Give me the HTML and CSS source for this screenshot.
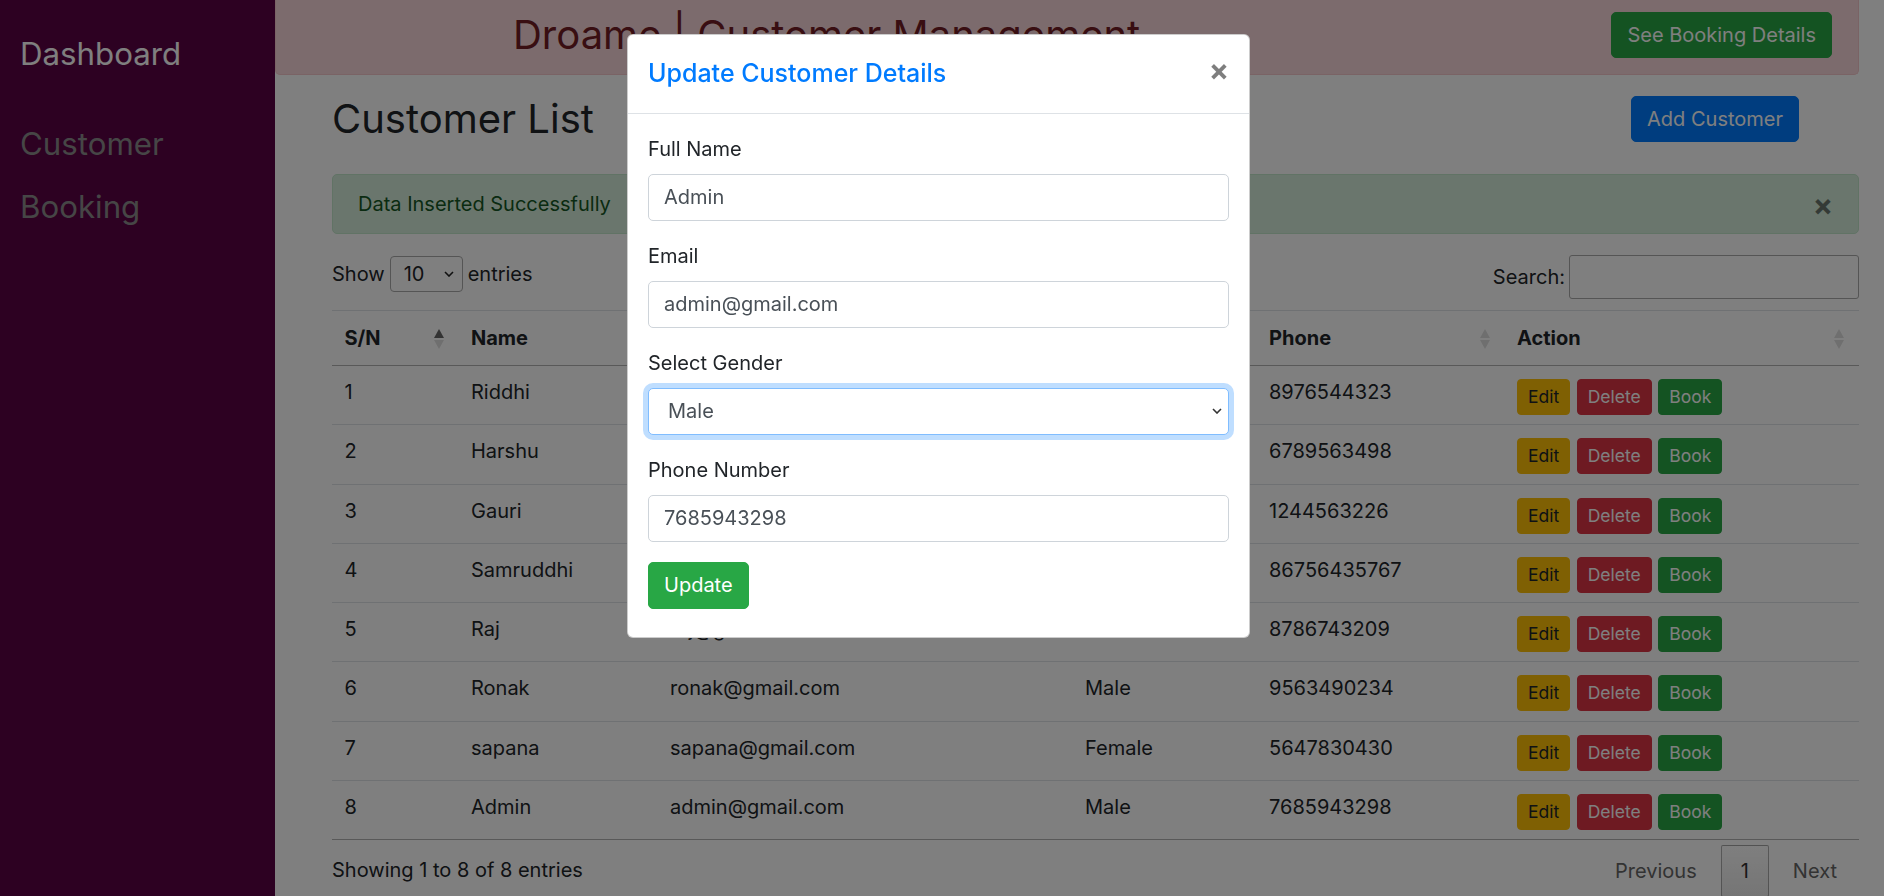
FILE: index.html
```html
<!DOCTYPE html>
<html lang="en">
<head>
<meta charset="utf-8">
<title>Droame | Customer Management</title>
<link rel="stylesheet" href="styles.css">
</head>
<body>
<div class="app">
  <aside class="sidebar">
    <div class="brand">Dashboard</div>
    <nav class="side-nav">
      <a class="side-link" href="#">Customer</a>
      <a class="side-link" href="#">Booking</a>
    </nav>
  </aside>
  <main class="main">
    <header class="topbar">
      <h2 class="topbar-title">Droame | Customer Management</h2>
      <button class="btn btn-success btn-top">See Booking Details</button>
    </header>
    <section class="content">
      <div class="page-head">
        <h2 class="page-title">Customer List</h2>
        <button class="btn btn-primary btn-top">Add Customer</button>
      </div>
      <div class="alert">Data Inserted Successfully<span class="alert-close">×</span></div>
      <div class="dt-controls">
        <div class="dt-length">Show <select class="dt-select"><option>10</option></select> entries</div>
        <div class="dt-filter">Search:<input class="dt-search" type="search"></div>
      </div>
      <table class="dt-table">
        <colgroup>
          <col class="c-sn"><col class="c-name"><col class="c-email"><col class="c-gender"><col class="c-phone"><col class="c-action">
        </colgroup>
        <thead>
          <tr>
            <th>S/N<span class="sort sort-asc"><i class="up"></i><i class="down"></i></span></th>
            <th>Name<span class="sort"><i class="up"></i><i class="down"></i></span></th>
            <th>Email<span class="sort"><i class="up"></i><i class="down"></i></span></th>
            <th>Gender<span class="sort"><i class="up"></i><i class="down"></i></span></th>
            <th>Phone<span class="sort"><i class="up"></i><i class="down"></i></span></th>
            <th>Action<span class="sort"><i class="up"></i><i class="down"></i></span></th>
          </tr>
        </thead>
        <tbody>
          <tr><td>1</td><td>Riddhi</td><td>riddhi@gmail.com</td><td>Female</td><td>8976544323</td><td><div class="actions"><button class="btn btn-sm btn-warning">Edit</button><button class="btn btn-sm btn-danger">Delete</button><button class="btn btn-sm btn-success">Book</button></div></td></tr>
          <tr><td>2</td><td>Harshu</td><td>harshu@gmail.com</td><td>Male</td><td>6789563498</td><td><div class="actions"><button class="btn btn-sm btn-warning">Edit</button><button class="btn btn-sm btn-danger">Delete</button><button class="btn btn-sm btn-success">Book</button></div></td></tr>
          <tr><td>3</td><td>Gauri</td><td>gauri@gmail.com</td><td>Female</td><td>1244563226</td><td><div class="actions"><button class="btn btn-sm btn-warning">Edit</button><button class="btn btn-sm btn-danger">Delete</button><button class="btn btn-sm btn-success">Book</button></div></td></tr>
          <tr><td>4</td><td>Samruddhi</td><td>samruddhi@gmail.com</td><td>Female</td><td>86756435767</td><td><div class="actions"><button class="btn btn-sm btn-warning">Edit</button><button class="btn btn-sm btn-danger">Delete</button><button class="btn btn-sm btn-success">Book</button></div></td></tr>
          <tr><td>5</td><td>Raj</td><td>raj@gmail.com</td><td>Male</td><td>8786743209</td><td><div class="actions"><button class="btn btn-sm btn-warning">Edit</button><button class="btn btn-sm btn-danger">Delete</button><button class="btn btn-sm btn-success">Book</button></div></td></tr>
          <tr><td>6</td><td>Ronak</td><td>ronak@gmail.com</td><td>Male</td><td>9563490234</td><td><div class="actions"><button class="btn btn-sm btn-warning">Edit</button><button class="btn btn-sm btn-danger">Delete</button><button class="btn btn-sm btn-success">Book</button></div></td></tr>
          <tr><td>7</td><td>sapana</td><td>sapana@gmail.com</td><td>Female</td><td>5647830430</td><td><div class="actions"><button class="btn btn-sm btn-warning">Edit</button><button class="btn btn-sm btn-danger">Delete</button><button class="btn btn-sm btn-success">Book</button></div></td></tr>
          <tr><td>8</td><td>Admin</td><td>admin@gmail.com</td><td>Male</td><td>7685943298</td><td><div class="actions"><button class="btn btn-sm btn-warning">Edit</button><button class="btn btn-sm btn-danger">Delete</button><button class="btn btn-sm btn-success">Book</button></div></td></tr>
        </tbody>
      </table>
      <div class="dt-footer">
        <div class="dt-info">Showing 1 to 8 of 8 entries</div>
        <div class="dt-paginate">
          <a class="page-btn disabled">Previous</a><a class="page-btn current">1</a><a class="page-btn disabled">Next</a>
        </div>
      </div>
    </section>
  </main>
</div>

<div class="backdrop"></div>

<div class="modal">
  <div class="modal-dialog">
    <div class="modal-content">
      <div class="modal-header">
        <h5 class="modal-title">Update Customer Details</h5>
        <button class="close" type="button">×</button>
      </div>
      <div class="modal-body">
        <form>
          <div class="form-group">
            <label>Full Name</label>
            <input class="form-control" type="text" value="Admin">
          </div>
          <div class="form-group">
            <label>Email</label>
            <input class="form-control" type="email" value="admin@gmail.com">
          </div>
          <div class="form-group">
            <label>Select Gender</label>
            <select class="form-control form-select focused"><option>Male</option><option>Female</option></select>
          </div>
          <div class="form-group">
            <label>Phone Number</label>
            <input class="form-control" type="text" value="7685943298">
          </div>
          <button class="btn btn-success" type="button">Update</button>
        </form>
      </div>
    </div>
  </div>
</div>
</body>
</html>
```

FILE: styles.css
```css
* { box-sizing: border-box; }

html, body {
  margin: 0;
  height: 100%;
}

body {
  font-family: Inter, "Noto Sans", sans-serif;
  font-size: 20px;
  line-height: 1.5;
  color: #212529;
  background: #fff;
  overflow: hidden;
}

.app {
  display: flex;
  min-height: 896px;
}

/* Sidebar */
.sidebar {
  flex: 0 0 275px;
  width: 275px;
  background: #5a0244;
  padding: 36px 20px;
}

.brand {
  font-size: 31.25px;
  line-height: 36px;
  color: #ffffff;
}

.side-nav {
  margin-top: 54px;
  display: flex;
  flex-direction: column;
  gap: 27px;
}

.side-link {
  font-size: 31.25px;
  line-height: 36px;
  color: #8c8c8c;
  text-decoration: none;
}

/* Main */
.main {
  flex: 1;
  min-width: 0;
  padding-right: 25px;
}

.topbar {
  height: 75px;
  background: #f8d7da;
  border: 1px solid #f5c6cb;
  border-top: 0;
  border-radius: 0 0 5px 5px;
  display: flex;
  align-items: center;
  justify-content: space-between;
  padding: 0 26px 4px 237px;
}

.topbar-title {
  margin: 0;
  font-size: 40px;
  font-weight: 400;
  line-height: 48px;
  color: #721c24;
}

.btn {
  display: inline-block;
  font-family: inherit;
  font-size: 20px;
  font-weight: 400;
  line-height: 30px;
  padding: 7.5px 15px;
  border: 1px solid transparent;
  border-radius: 5px;
  color: #fff;
  cursor: pointer;
  white-space: nowrap;
}

.btn-top { padding: 7px 15px; }

.btn-success { background: #28a745; border-color: #28a745; }
.btn-primary { background: #007bff; border-color: #007bff; }
.btn-warning { background: #ffc107; border-color: #ffc107; color: #212529; }
.btn-danger { background: #dc3545; border-color: #dc3545; }

.btn-sm {
  font-size: 17.5px;
  line-height: 24px;
  padding: 5px 10px;
  border-radius: 4px;
}

.content {
  margin-left: 57px;
}

.page-head {
  display: flex;
  align-items: center;
  justify-content: space-between;
  margin-top: 20px;
  padding-right: 60px;
}

.page-title {
  margin: 0;
  font-size: 40px;
  font-weight: 400;
  line-height: 48px;
  color: #212529;
}

.alert {
  position: relative;
  margin-top: 31px;
  padding: 14px 25px;
  line-height: 30px;
  background: #d4edda;
  border: 1px solid #c3e6cb;
  border-radius: 5px;
  color: #155724;
}

.alert-close {
  position: absolute;
  top: 0;
  right: 0;
  padding: 15px 25px;
  font-size: 30px;
  font-weight: 700;
  line-height: 1;
  color: #000;
  opacity: .5;
}

/* DataTables controls */
.dt-controls {
  display: flex;
  justify-content: space-between;
  align-items: flex-start;
  margin-top: 21px;
}

.dt-length {
  display: flex;
  align-items: center;
  height: 36px;
  margin-top: 1px;
  gap: 5px;
}

.dt-select {
  appearance: none;
  -webkit-appearance: none;
  width: 73px;
  height: 36px;
  padding: 0 5px 0 13px;
  font-family: inherit;
  font-size: 20px;
  color: #212529;
  border: 1px solid #aaa;
  border-radius: 4px;
  background: #fff url("data:image/svg+xml,%3Csvg xmlns='http://www.w3.org/2000/svg' width='10' height='6' viewBox='0 0 10 6'%3E%3Cpath d='M1 1l4 4 4-4' fill='none' stroke='%23222' stroke-width='1.6'/%3E%3C/svg%3E") no-repeat right 8px center;
}

.dt-filter {
  display: flex;
  align-items: center;
  gap: 4px;
}

.dt-search {
  width: 290px;
  height: 44px;
  padding: 5px;
  font-family: inherit;
  font-size: 20px;
  border: 1px solid #aaa;
  border-radius: 3px;
  background: #fff;
}

/* Table */
.dt-table {
  width: 100%;
  margin-top: 11px;
  border-collapse: collapse;
  table-layout: fixed;
}

.c-sn { width: 126.5px; }
.c-name { width: 199px; }
.c-email { width: 415px; }
.c-gender { width: 184px; }
.c-phone { width: 248px; }
.c-action { width: 354.5px; }

.dt-table th {
  position: relative;
  text-align: left;
  font-weight: 700;
  padding: 12px 12.5px;
  line-height: 30px;
  border-top: 1px solid #dee2e6;
  border-bottom: 1px solid rgba(0, 0, 0, .3);
}

.dt-table td {
  padding: 11px 12.5px 9.25px;
  line-height: 30px;
  vertical-align: top;
  border-top: 1px solid #dee2e6;
  white-space: nowrap;
}

.dt-table tbody tr:first-child td { border-top: 0; }
.dt-table tbody tr:last-child td { border-bottom: 1px solid rgba(0, 0, 0, .3); }

.sort {
  position: absolute;
  right: 15px;
  top: 18px;
  display: flex;
  flex-direction: column;
  gap: 2px;
}

.sort i {
  display: block;
  width: 0;
  height: 0;
  border-left: 5.5px solid transparent;
  border-right: 5.5px solid transparent;
}

.sort .up { border-bottom: 9px solid rgba(0, 0, 0, .13); }
.sort .down { border-top: 9px solid rgba(0, 0, 0, .13); }
.sort-asc .up { border-bottom-color: rgba(0, 0, 0, .6); }

.actions {
  display: flex;
  gap: 6.5px;
  padding-top: 2px;
}

/* Footer */
.dt-footer {
  display: flex;
  justify-content: space-between;
  align-items: flex-start;
}

.dt-info {
  padding-top: 15px;
}

.dt-paginate {
  display: flex;
  padding-top: 5px;
  padding-right: 1px;
}

.page-btn {
  display: block;
  padding: 10px 20px;
  margin-left: 3px;
  line-height: 30px;
  border: 1px solid transparent;
  border-radius: 2px;
  color: #666;
}

.page-btn.current {
  padding: 10px 19px;
  color: #333;
  border-color: rgba(0, 0, 0, .3);
  background: linear-gradient(to bottom, rgba(230, 230, 230, .05) 0%, rgba(0, 0, 0, .08) 100%);
}

/* Modal */
.backdrop {
  position: fixed;
  inset: 0;
  background: #000;
  opacity: .5;
  z-index: 1040;
}

.modal {
  position: fixed;
  inset: 0;
  z-index: 1050;
}

.modal-dialog {
  position: absolute;
  left: 627px;
  top: 34px;
  width: 623px;
}

.modal-content {
  background: #fff;
  border: 1px solid rgba(0, 0, 0, .2);
  border-radius: 6px;
}

.modal-header {
  display: flex;
  align-items: flex-start;
  justify-content: space-between;
  padding: 20px;
  border-bottom: 1px solid #dee2e6;
}

.modal-title {
  margin: 0;
  font-size: 25px;
  line-height: 37.5px;
  font-weight: 500;
  color: #007bff;
}

.close {
  padding: 20px;
  margin: -20px -20px -20px auto;
  font-family: inherit;
  font-size: 30px;
  font-weight: 700;
  line-height: 1;
  color: #000;
  opacity: .5;
  text-shadow: 0 1px 0 #fff;
  background: transparent;
  border: 0;
}

.modal-body {
  padding: 20px 20px 28.5px;
}

.modal-body form { margin: 0; }

.form-group {
  margin-bottom: 20px;
}

.form-group label {
  display: inline-block;
  margin-bottom: 10px;
  line-height: 30px;
  color: #212529;
}

.form-control {
  display: block;
  width: 100%;
  height: 47px;
  padding: 7.5px 15px;
  font-family: inherit;
  font-size: 20px;
  line-height: 30px;
  color: #495057;
  background: #fff;
  border: 1px solid #ced4da;
  border-radius: 5px;
}

.form-select {
  appearance: none;
  -webkit-appearance: none;
  padding-left: 19px;
  background: #fff url("data:image/svg+xml,%3Csvg xmlns='http://www.w3.org/2000/svg' width='10' height='6' viewBox='0 0 10 6'%3E%3Cpath d='M1 1l4 4 4-4' fill='none' stroke='%23333' stroke-width='1.6'/%3E%3C/svg%3E") no-repeat right 6px center;
}

.form-select.focused {
  border-color: #80bdff;
  box-shadow: 0 0 0 5px rgba(0, 123, 255, .25);
  outline: 0;
}
```
